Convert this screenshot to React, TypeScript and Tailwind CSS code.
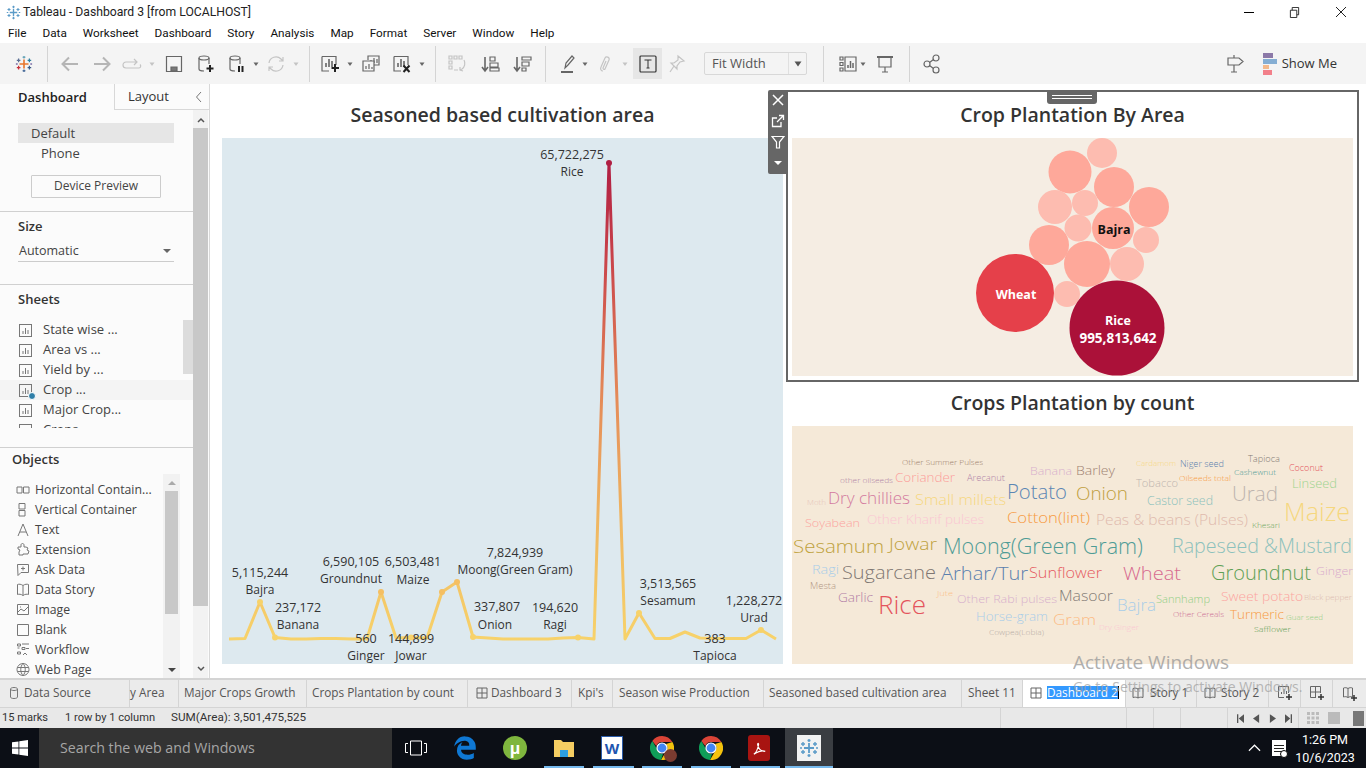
import React from "react";
import { FaEdgeLegacy } from "react-icons/fa6";

const menu = ["File", "Data", "Worksheet", "Dashboard", "Story", "Analysis", "Map", "Format", "Server", "Window", "Help"];

const I = ({ c, children }: { c: string; children: React.ReactNode }) => (
  <svg viewBox="0 0 20 20" fill="none" stroke="#666" strokeWidth="1.2" className={`w-5 h-5 shrink-0 ${c}`}>
    {children}
  </svg>
);
const Caret = ({ c, light }: { c: string; light?: boolean }) => (
  <svg viewBox="0 0 8 8" className={`w-2 h-2 shrink-0 ${c}`}>
    <path d="M1.5 2.5h5L4 6z" fill={light ? "#c4c4c4" : "#666"} />
  </svg>
);
const Sep = ({ c }: { c: string }) => <div className={`w-px h-[36px] bg-[#d4d4d4] shrink-0 ${c}`} />;

const TableauLogo = ({ size, mono }: { size: number; mono?: boolean }) => {
  const col = (x: string) => (mono ? "#5b9bc8" : x);
  return (
    <svg viewBox="0 0 20 20" width={size} height={size} fill="none" strokeWidth="1.4">
      <path d="M10 5v10M5 10h10" stroke={col("#e8762b")} strokeWidth="1.8" />
      <path d="M4 4v4M2 6h4" stroke={col("#5b6f94")} />
      <path d="M16 4v4M14 6h4" stroke={col("#2f7f9e")} />
      <path d="M4 12v4M2 14h4" stroke={col("#c8303a")} />
      <path d="M16 12v4M14 14h4" stroke={col("#3b5a85")} />
      <path d="M10 1v3M8.5 2.5h3" stroke={col("#6aa5b8")} />
      <path d="M10 16v3M8.5 17.5h3" stroke={col("#4d6f9c")} />
      <path d="M1 10h2M17 10h2" stroke={col("#7b6ea8")} />
    </svg>
  );
};

const Toolbar = () => (
  <div className="h-[41px] bg-[#f4f4f4] flex items-center shrink-0">
    <span className="ml-[14px] w-5 flex justify-center shrink-0"><TableauLogo size={18} /></span>
    <Sep c="ml-[13px]" />
    <I c="ml-[12px]"><path d="M18 10H2.5M9 3.5 2.5 10 9 16.5" stroke="#b5b5b5" strokeWidth="2" /></I>
    <I c="ml-[12px]"><path d="M2 10h15.5M11 3.5l6.5 6.5-6.5 6.5" stroke="#b5b5b5" strokeWidth="2" /></I>
    <I c="ml-[10px]"><path d="M15 8H4a3 3 0 0 0 0 6h13a2 2 0 0 0 1-3.500M12 5l3 3-3 3" stroke="#c4c4c4" /></I>
    <Caret c="ml-[6px]" light />
    <I c="ml-[8px]"><path d="M2.500 2.500h15v15h-15z" /><path d="M7 17v-4h6v4z" fill="#777" /></I>
    <I c="ml-[12px]"><ellipse cx="8" cy="4" rx="5" ry="2" /><path d="M3 4v11c0 1 2 2 5 2M13 4v6" /><path d="M14 11v7M10.500 14.500h7" stroke="#222" strokeWidth="2" /></I>
    <I c="ml-[11px]"><ellipse cx="8" cy="4" rx="5" ry="2" /><path d="M3 4v11c0 1 2 2 5 2M13 4v6" /><path d="M12 12v6M15.500 12v6" stroke="#222" strokeWidth="2" /></I>
    <Caret c="ml-[5px]" />
    <I c="ml-[6px]"><path d="M3 9a7 7 0 0 1 12-4l2 2M17 11a7 7 0 0 1-12 4l-2-2M17 3v4h-4M3 17v-4h4" stroke="#c4c4c4" /></I>
    <Caret c="ml-[6px]" light />
    <Sep c="ml-[9px]" />
    <I c="ml-[10px]"><path d="M2 2.500h14V11M9 17H2V2.500" /><path d="M6 13V9M9 13V5M12 13V7" strokeWidth="1.600" /><path d="M15 10v8M11.500 14h7.500" stroke="#222" strokeWidth="2" /></I>
    <Caret c="ml-[6px]" />
    <I c="ml-[7px]"><path d="M7 6V2h11v9h-5" /><path d="M10 9V6M13 9V4M16 9V5" /><path d="M2 7h11v10H2z" fill="#f4f4f4" /><path d="M5 15v-3M8 15v-5M11 15v-2" /></I>
    <I c="ml-[11px]"><path d="M2 2.500h14V11M9 17H2V2.500" /><path d="M6 13V9M9 13V5M12 13V7" strokeWidth="1.600" /><path d="m11.500 11.500 6 6.500M17.500 11.500l-6 6.500" stroke="#222" strokeWidth="2" /></I>
    <Caret c="ml-[6px]" />
    <Sep c="ml-[9px]" />
    <I c="ml-[11px]"><path d="M2 2h3v3H2zM7 2h3v3H7zM12 2h3v3h-3zM2 7h3v3H2zM2 12h3v3H2zM7 16h4M17 6a7 7 0 0 1-2 9l-2 1M13 13l0 3 3 1" stroke="#c4c4c4" /></I>
    <I c="ml-[13px]"><path d="M5 3v13M2 13l3 4 3-4" strokeWidth="1.600" /><path d="M10 3h5v4h-5zM10 9h8v4h-8zM10 14h9v3h-9z" /></I>
    <I c="ml-[12px]"><path d="M5 3v13M2 13l3 4 3-4" strokeWidth="1.600" /><path d="M10 3h9v3h-9zM10 8h7v4h-7zM10 14h4v3h-4z" /></I>
    <Sep c="ml-[13px]" />
    <I c="ml-[12px]"><path d="m7 14 1-5 6-7 2 2-6 7z" /><path d="M3 18h12" strokeWidth="2" /></I>
    <Caret c="ml-[3px]" />
    <I c="ml-[6px]"><path d="M8 17c-2 0-3-2-2-4l4-9c1-2 5-1 4 2l-4 9c-1 1-2 0-2-1l3-7" stroke="#c4c4c4" /></I>
    <Caret c="ml-[6px]" light />
    <div className="ml-[4px] w-[29px] h-[31px] bg-[#e6e6e6] flex items-center justify-center shrink-0">
      <svg viewBox="0 0 18 18" className="w-[18px] h-[18px]" fill="none" stroke="#333">
        <rect x="1" y="1" width="16" height="16" rx="1" strokeWidth="1.200" />
        <path d="M5.500 5h7M9 5v8M7.500 13h3" />
      </svg>
    </div>
    <I c="ml-[5px]"><path d="m11 2 6 5-4 1-3 4 0 3-6-6 3 0 4-3zM7 12l-4 6" stroke="#c4c4c4" /></I>
    <div className="ml-[17px] w-[103px] h-[23px] border border-[#d8d8d8] rounded-[2px] flex items-center shrink-0 text-[13px] text-[#555]">
      <span className="pl-[7px] flex-1">Fit Width</span>
      <span className="w-[18px] h-full border-l border-[#e0e0e0] flex items-center justify-center">
        <svg viewBox="0 0 8 8" className="w-2 h-2"><path d="M0.500 1.500h7L4 6.500z" fill="#555" /></svg>
      </span>
    </div>
    <Sep c="ml-[16px]" />
    <I c="ml-[14px]"><path d="M2 3h3v3H2zM2 8.500h3v3H2zM2 14h3v3H2zM7 3h11v14H7z" /><path d="M10 14v-3M12.500 14V7M15 14v-5" strokeWidth="1.500" /></I>
    <Caret c="ml-px" />
    <I c="ml-[8px]"><path d="M2 3h16" strokeWidth="2" /><path d="M4 3v10h12V3M10 13v5M7 18h6" /></I>
    <Sep c="ml-[14px]" />
    <I c="ml-[12px]"><circle cx="5" cy="10" r="3" /><circle cx="14" cy="4" r="3" /><circle cx="14" cy="16" r="3" /><path d="m7.500 8.500 4-3M7.500 11.500l4 3" /></I>
    <I c="ml-auto"><path d="M3 4h11l4 3.500-4 3.500H3zM9 1v3M9 11v7M6 18h6" /></I>
    <div className="ml-[18px] mr-[29px] flex items-center gap-[5px] text-[13px] text-[#333]">
      <div className="w-[14px] flex flex-col">
        <span className="h-[5px] w-[10px] bg-[#8c79a8]" />
        <span className="h-[5px] w-[14px] bg-[#85aed3] mt-px" />
        <span className="h-[4px] w-[6px] bg-[#f5b98a] mt-px" />
        <span className="h-[5px] w-[9px] bg-[#f2808a] mt-px" />
      </div>
      Show Me
    </div>
  </div>
);

const SheetIcon = ({ check }: { check?: boolean }) => (
  <span className="relative w-[13px] h-[13px] shrink-0">
    <svg viewBox="0 0 13 13" className="w-[13px] h-[13px]" fill="none" stroke="#777">
      <rect x="0.500" y="0.500" width="12" height="12" />
      <path d="M4 10V7M6.500 10V4M9 10V6" />
    </svg>
    {check && <span className="absolute left-[9px] top-[8px] w-[8px] h-[8px] rounded-full bg-[#2f7fa8] border border-white" />}
  </span>
);

const sheets = ["State wise ...", "Area vs ...", "Yield by ...", "Crop ...", "Major Crop...", "Crops"];

const objectIcons: Record<string, React.ReactNode> = {
  "Horizontal Contain...": <path d="M1 5h5v6H1zM7.500 5h5.500v6H7.500z" />,
  "Vertical Container": <path d="M3 1.500h6v5.500H3zM3 8.500h6V14H3z" />,
  Text: <path d="M2 14 7 2l5 12M4 10h6" />,
  Extension: <path d="M2 5h3V3c0-2 3-2 3 0v2h2l2 1-1 2 2 1-1 3H7v1H3v-3l1-2-2-1z" />,
  "Ask Data": <path d="M1.500 2.500h11v8H5l-3 3zM5 6.500h4M7 4.500v4" />,
  "Data Story": <path d="M7 3.500C5 2 3 2 1.500 2.500v10C3 12 5 12 7 13.500c2-1.500 4-1.500 5.500-1v-10C11 2 9 2 7 3.500zM7 3.500v10" />,
  Image: <path d="M1.500 2.500h11v10h-11zM2 10l3-3 3 2 4-4M4 5h1" />,
  Blank: <path d="M1.500 2.500h11v11h-11z" />,
  Workflow: <path d="M1.500 2h3v2h-3zM6 2h7M1.500 6h2M6 5.500h3v2H6zM10 6.500h3M1.500 10h3v2h-3zM7 13l2-2 2 2" />,
  "Web Page": <path d="M7 1.500a6 6 0 1 0 .01 0zM1.500 5.500h11M1.500 9.500h11M7 1.500c-3 3-3 9 0 12M7 1.500c3 3 3 9 0 12" />,
};

const Sidebar = () => (
  <aside className="w-[210px] shrink-0 bg-[#fbfbfb] border-r border-[#d8d8d8] flex flex-col">
    <div className="h-[26px] flex shrink-0 text-[13px]">
      <div className="w-[114px] pl-[18px] font-semibold text-[#222] leading-[27px]">Dashboard</div>
      <div className="w-[95px] pt-px border-l border-b border-[#d8d8d8] flex items-center justify-between pl-[13px] pr-[6px] text-[#333]">
        Layout
        <svg viewBox="0 0 8 12" className="w-2 h-3" fill="none" stroke="#777"><path d="M6 1 1.500 6 6 11" /></svg>
      </div>
    </div>
    <div className="flex flex-1 min-h-0">
      <div className="w-[193px] shrink-0 flex flex-col text-[13px] text-[#444]">
        <div className="h-[102px] border-b border-[#d0d0d0] shrink-0">
          <div className="ml-[18px] mt-[13px] w-[156px] h-[20px] bg-[#e6e6e6] pl-[13px] leading-[20px]">Default</div>
          <div className="ml-[41px] leading-[20px]">Phone</div>
          <div className="ml-[31px] mt-[12px] w-[130px] h-[23px] border border-[#ccc] text-[12px] text-center leading-[20px] rounded-[1px]">Device Preview</div>
        </div>
        <div className="h-[73px] border-b border-[#d0d0d0] shrink-0 pl-[18px]">
          <div className="mt-[4px] font-semibold text-[13px] text-[#333] leading-[20px]">Size</div>
          <div className="mt-[5px] w-[156px] h-[21px] border-b border-[#ccc] flex items-center justify-between pl-px pr-[3px] text-[12.500px]">
            Automatic
            <svg viewBox="0 0 8 6" className="w-2 h-[6px]"><path d="M0 1h8L4 5z" fill="#666" /></svg>
          </div>
        </div>
        <div className="h-[163px] border-b border-[#d0d0d0] shrink-0 flex flex-col overflow-hidden">
          <div className="pl-[18px] mt-[4px] font-semibold text-[#333] leading-[20px]">Sheets</div>
          <div className="relative mt-[11px] h-[108px] overflow-hidden">
            <div className="absolute right-0 top-0 w-[10px] h-[54px] bg-[#dcdcdc]" />
            {sheets.map((s, i) => (
              <div key={s} className={`h-[20px] flex items-center pl-[19px] gap-[11px] ${i === 3 ? "bg-[#f4f4f4]" : ""}`}>
                <SheetIcon check={i === 3} />
                {s}
              </div>
            ))}
          </div>
        </div>
        <div className="flex-1 min-h-0 flex flex-col">
          <div className="pl-[12px] mt-px font-semibold text-[#333] leading-[20px]">Objects</div>
          <div className="mt-[5px] flex flex-1 min-h-0">
            <div className="w-[163px] pt-[6px] text-[12.250px]">
              {Object.keys(objectIcons).map((k) => (
                <div key={k} className="h-[20px] flex items-center pl-[16px] gap-[5px] whitespace-nowrap">
                  <svg viewBox="0 0 14 16" className="w-[14px] h-[16px] shrink-0" fill="none" stroke="#777">{objectIcons[k]}</svg>
                  {k}
                </div>
              ))}
            </div>
            <div className="w-[17px] bg-[#f2f2f2] flex flex-col items-center">
              <svg viewBox="0 0 8 6" className="w-2 h-[6px] mt-[6px]"><path d="M0 5h8L4 1z" fill="#aaa" /></svg>
              <div className="mt-[5px] w-[13px] h-[123px] bg-[#c8c8c8]" />
              <svg viewBox="0 0 8 6" className="w-2 h-[6px] mt-auto mb-[5px]"><path d="M0 1h8L4 5z" fill="#444" /></svg>
            </div>
          </div>
        </div>
      </div>
      <div className="w-[15px] shrink-0 bg-[#f2f2f2] flex flex-col items-center">
        <svg viewBox="0 0 8 6" className="w-2 h-[6px] mt-[7px]" fill="none" stroke="#555" strokeWidth="1.500"><path d="m1 5 3-3 3 3" /></svg>
        <div className="mt-[5px] w-[15px] h-[478px] bg-[#c8c8c8]" />
        <svg viewBox="0 0 8 6" className="w-2 h-[6px] mt-auto mb-[6px]" fill="none" stroke="#555" strokeWidth="1.500"><path d="m1 1 3 3 3-3" /></svg>
      </div>
    </div>
  </aside>
);

const linePts: [number, number][] = [
  [229, 639], [245, 638.5], [260, 602], [275, 637.5], [291, 639], [306, 639], [321, 638.5], [336, 638.5], [352, 639], [367, 639],
  [381, 592], [396, 638], [411, 637.5], [427, 638], [442, 592], [457, 582], [473, 637], [488, 638], [503, 639], [518, 639],
  [533, 639], [548, 639], [563, 638], [578, 637.5], [594, 639], [609, 163], [625, 639], [639, 613], [655, 638.5], [670, 638.5],
  [685, 632], [700, 638], [715, 638.5], [730, 638.5], [746, 638.5], [761, 630], [776, 639],
];
const lineDots = [[260, 602], [275, 637.5], [381, 592], [411, 637.5], [442, 592], [457, 582], [473, 637], [578, 637.5], [609, 163], [639, 613], [761, 630]];
const lineLabels: [string, number, number][] = [
  ["65,722,275", 572, 159], ["Rice", 572, 176],
  ["5,115,244", 260, 577], ["Bajra", 260, 594],
  ["237,172", 298, 612], ["Banana", 298, 629],
  ["6,590,105", 351, 566], ["Groundnut", 351, 583],
  ["6,503,481", 413, 566], ["Maize", 413, 584],
  ["7,824,939", 515, 557], ["Moong(Green Gram)", 515, 574],
  ["337,807", 497, 611], ["Onion", 495, 629],
  ["194,620", 555, 612], ["Ragi", 555, 629],
  ["3,513,565", 668, 588], ["Sesamum", 668, 605],
  ["1,228,272", 754, 605], ["Urad", 754, 622],
  ["560", 366, 643], ["Ginger", 366, 660],
  ["144,899", 411, 643], ["Jowar", 411, 660],
  ["383", 715, 643], ["Tapioca", 715, 660],
];

const LineChart = () => (
  <svg viewBox="222 138 561 526" className="w-[561px] h-[526px] bg-[#dde9ef] block">
    <defs>
      <linearGradient id="peak" gradientUnits="userSpaceOnUse" x1="0" y1="639" x2="0" y2="163">
        <stop offset="0" stopColor="#f7d26a" />
        <stop offset="0.25" stopColor="#efb662" />
        <stop offset="0.5" stopColor="#e58c58" />
        <stop offset="0.8" stopColor="#c9434a" />
        <stop offset="1" stopColor="#b01e42" />
      </linearGradient>
    </defs>
    <polyline points={linePts.map((p) => p.join(",")).join(" ")} fill="none" stroke="url(#peak)" strokeWidth="3" strokeLinejoin="round" />
    {lineDots.map(([x, y]) => (
      <circle key={x} cx={x} cy={y} r="3" fill={y < 200 ? "#b01e42" : y < 600 ? "#f5bf62" : "#f7d26a"} />
    ))}
    {lineLabels.map(([t, x, y]) => (
      <text key={t} x={x} y={y} textAnchor="middle" fontSize={/\d/.test(t) ? 12.5 : 12} fill="#333">{t}</text>
    ))}
  </svg>
);

const bubbles: [number, number, number, string][] = [
  [1102, 153, 15, "#fdbcb0"], [1070, 172, 21.5, "#fea89a"], [1114, 187, 20, "#fea89a"], [1149, 207, 20, "#fea89a"],
  [1055, 207, 17, "#fdbcb0"], [1085, 203, 13, "#fdbcb0"], [1113, 228, 21, "#fea89a"], [1146, 240, 13, "#fdbcb0"],
  [1078, 228, 13.5, "#fdbcb0"], [1049, 245, 20, "#fea89a"], [1087, 264, 23, "#fea89a"], [1127, 264, 17, "#fdbcb0"],
  [1067, 294, 13, "#fdbcb0"], [1015, 293, 39, "#e5404a"], [1117, 328, 47.500, "#ab1139"],
];

const BubbleChart = () => (
  <svg viewBox="792 138 561 238" className="w-[561px] h-[238px] bg-[#f5ede3] block">
    {bubbles.map(([x, y, r, f]) => <circle key={`${x}-${y}`} cx={x} cy={y} r={r} fill={f} />)}
    <g fontWeight="700" fontSize="12.500" textAnchor="middle">
      <text x="1114" y="234" fill="#111">Bajra</text>
      <text x="1016" y="299" fill="#fff">Wheat</text>
      <text x="1118" y="325" fill="#fff">Rice</text>
      <text x="1118" y="343" fill="#fff" fontSize="13.500">995,813,642</text>
    </g>
  </svg>
);

const words: [string, number, number, number, number, string][] = [
  ["Other Summer Pulses", 902, 465, 8, 81, "#9c7f6b"], ["other oilseeds", 840, 483, 7.500, 53, "#b083a6"], ["Coriander", 895, 482, 13, 60, "#fc9d9a"],
  ["Arecanut", 967, 481, 9, 38, "#b286a8"], ["Banana", 1030, 475, 11.500, 42, "#d7b0cd"], ["Barley", 1076, 475, 13, 39, "#a08272"],
  ["Moth", 807, 505, 8, 19, "#e6c4b8"], ["Dry chillies", 828, 504, 16, 82, "#d37a9f"], ["Small millets", 915, 505, 15, 91, "#f5d77e"],
  ["Potato", 1007, 499, 20, 60, "#5b86b4"], ["Onion", 1076, 500, 18, 52, "#bf9e3d"], ["Soyabean", 805, 527, 11.500, 55, "#fca4a0"],
  ["Other Kharif pulses", 867, 524, 12.500, 117, "#fbc6d3"], ["Cotton(lint)", 1007, 523, 14.500, 83, "#f79a42"], ["Peas & beans (Pulses)", 1096, 525, 14.500, 152, "#e0b9ad"],
  ["Khesari", 1252, 528, 8, 28, "#6ba85c"], ["Maize", 1284, 521, 25, 66, "#f5d77e"], ["Sesamum", 793, 553, 19, 91, "#bfa23d"],
  ["Jowar", 889, 550, 17, 48, "#bfa23d"], ["Moong(Green Gram)", 943, 554, 22, 200, "#4f9c96"], ["Rapeseed &Mustard", 1172, 553, 20, 180, "#8cc1bc"],
  ["Ragi", 812, 574, 12, 27, "#a9cde8"], ["Sugarcane", 842, 579, 18, 94, "#7f7772"], ["Arhar/Tur", 941, 580, 19, 87, "#5b7fae"],
  ["Sunflower", 1029, 578, 15, 73, "#e55a5f"], ["Wheat", 1123, 580, 19, 58, "#d7698f"], ["Groundnut", 1211, 580, 20, 100, "#5fa055"],
  ["Ginger", 1316, 575, 11.500, 37, "#d8a9cc"], ["Mesta", 810, 589, 9, 26, "#b39785"], ["Garlic", 838, 602, 12.500, 35, "#b27fa6"],
  ["Rice", 878, 614, 25, 48, "#e4545c"], ["Jute", 937, 596, 8, 16, "#fbbf88"], ["Other Rabi pulses", 957, 603, 11.500, 100, "#d7b0cd"],
  ["Masoor", 1059, 601, 14, 54, "#837b76"], ["Bajra", 1117, 611, 15.500, 39, "#a9cde8"], ["Sannhamp", 1156, 603, 10, 54, "#93cf85"],
  ["Sweet potato", 1221, 601, 13, 82, "#fca4a0"], ["Black pepper", 1304, 600, 8, 48, "#dcbcb0"], ["Horse-gram", 976, 621, 12, 72, "#a9cde8"],
  ["Gram", 1053, 625, 15, 43, "#fcbb84"], ["Other Cereals", 1173, 617, 8, 51, "#cc6d94"], ["Turmeric", 1230, 619, 12.500, 54, "#f79a42"],
  ["Guar seed", 1286, 620, 8, 37, "#93cf85"], ["Dry Ginger", 1099, 630, 8, 40, "#fbc6d3"], ["Cowpea(Lobia)", 989, 635, 8, 55, "#b5aca6"],
  ["Safflower", 1254, 632, 8, 37, "#5fa055"], ["Cardamom", 1136, 466, 8, 40, "#f5d77e"], ["Niger seed", 1180, 467, 9.500, 44, "#5b7fae"],
  ["Tapioca", 1248, 462, 9, 32, "#837b76"], ["Cashewnut", 1234, 475, 8, 42, "#4f9c96"], ["Coconut", 1289, 471, 9, 34, "#e4545c"],
  ["Oilseeds total", 1179, 481, 8, 52, "#f79a42"], ["Tobacco", 1136, 487, 11, 42, "#bdb4ae"], ["Linseed", 1292, 488, 12.500, 45, "#9dd48f"],
  ["Urad", 1232, 501, 20, 46, "#bdb4ae"], ["Castor seed", 1147, 505, 12, 66, "#8cc1bc"],
];

const WordCloud = () => (
  <svg viewBox="792 426 561 238" className="w-[561px] h-[238px] bg-[#f5e9d8] block font-light">
    {words.map(([t, x, y, s, w, c]) => (
      <text key={t} x={x} y={y} fontSize={s} fill={c} textLength={w} lengthAdjust="spacingAndGlyphs">{t}</text>
    ))}
  </svg>
);

const Dashboard = () => (
  <div className="relative flex flex-1 bg-white">
    <div className="ml-[12px] w-[561px] shrink-0">
      <h2 className="h-[54px] pt-[8px] flex items-center justify-center text-[19.500px] font-semibold text-[#333]">Seasoned based cultivation area</h2>
      <LineChart />
    </div>
    <div className="ml-[3px] w-[573px] shrink-0">
      <div className="relative mt-[6px] h-[292px] border-2 border-[#666] px-[4px]">
        <h2 className="h-[46px] flex items-center justify-center text-[19.500px] font-semibold text-[#333]">Crop Plantation By Area</h2>
        <BubbleChart />
        <div className="absolute left-[-20px] top-[-2px] w-[20px] h-[84px] bg-[#666] rounded-l-[2px] flex flex-col items-center text-white">
          <svg viewBox="0 0 14 14" className="w-[14px] h-[14px] mt-[3px]" fill="none" stroke="#fff" strokeWidth="1.500"><path d="m2 2 10 10M12 2 2 12" /></svg>
          <svg viewBox="0 0 14 14" className="w-[14px] h-[14px] mt-[7px]" fill="none" stroke="#fff" strokeWidth="1.300"><path d="M10 8v4.500H1.500V4H6M6 8l6-6M8 1.500h4.500V6" /></svg>
          <svg viewBox="0 0 14 14" className="w-[14px] h-[14px] mt-[7px]" fill="none" stroke="#fff" strokeWidth="1.200"><path d="M1 1.500h12L8.500 7v6h-3V7z" /></svg>
          <svg viewBox="0 0 8 6" className="w-2 h-[6px] mt-[11px]"><path d="M0 1h8L4 5z" fill="#fff" /></svg>
        </div>
        <div className="absolute left-[259px] top-[-2px] w-[50px] h-[14px] bg-[#666] rounded-b-[3px] flex flex-col items-center justify-center gap-[2px]">
          <span className="w-[40px] h-px bg-white" />
          <span className="w-[40px] h-px bg-white" />
        </div>
      </div>
      <h2 className="h-[44px] pb-[2px] flex items-center justify-center text-[19.500px] font-semibold text-[#333]">Crops Plantation by count</h2>
      <div className="pl-[6px]"><WordCloud /></div>
    </div>
    <div className="absolute left-[863px] top-[566px] text-[19px] text-[#9d9d9d] leading-[24px] whitespace-nowrap opacity-80">Activate Windows</div>
    <div className="absolute left-[863px] top-[593px] text-[14px] text-[#9d9d9d] leading-[20px] whitespace-nowrap z-10 opacity-70">Go to Settings to activate Windows.</div>
  </div>
);

const tabBase = "h-full pb-[2px] flex items-center border-r border-[#d4d4d4] shrink-0";
const TabGrid = () => (
  <svg viewBox="0 0 12 12" className="w-3 h-3 shrink-0" fill="none" stroke="#666"><path d="M1 1h10v10H1zM6 1v10M1 6h10" /></svg>
);
const TabBook = () => (
  <svg viewBox="0 0 12 12" className="w-3 h-3 shrink-0" fill="none" stroke="#666"><path d="M6 2C4.500 1 2.500 1 1 1.500v9c1.500-.5 3.500-.5 5 .5 1.500-1 3.500-1 5-.5v-9C9.500 1 7.500 1 6 2zM6 2v9" /></svg>
);

const Tabs = () => (
  <div className="h-[29px] shrink-0 flex bg-[#ebebeb] border-t-2 border-[#d4d4d4] text-[11.800px] text-[#555] whitespace-nowrap">
    <div className={`${tabBase} w-[130px] pl-[9px] gap-[5px]`}>
      <svg viewBox="0 0 10 14" className="w-[10px] h-[14px]" fill="none" stroke="#777"><path d="M1.500 3c0-2 7-2 7 0v8c0 2-7 2-7 0zM1.500 3c0 2 7 2 7 0" /></svg>
      Data Source
    </div>
    <div className={`${tabBase} w-[49px]`}>y Area</div>
    <div className={`${tabBase} w-[128px] pl-[5px]`}>Major Crops Growth</div>
    <div className={`${tabBase} w-[161px] pl-[5px]`}>Crops Plantation by count</div>
    <div className={`${tabBase} w-[104px] pl-[8px] gap-[3px]`}><TabGrid />Dashboard 3</div>
    <div className={`${tabBase} w-[41px] pl-[6px]`}>Kpi's</div>
    <div className={`${tabBase} w-[151px] pl-[6px]`}>Season wise Production</div>
    <div className={`${tabBase} w-[198px] pl-[5px]`}>Seasoned based cultivation area</div>
    <div className={`${tabBase} w-[61px] pl-[6px]`}>Sheet 11</div>
    <div className={`${tabBase} w-[103px] bg-white pl-[7px] gap-[5px]`}>
      <TabGrid />
      <span className="bg-[#3399ff] text-white h-[13px] leading-[13px] border-r border-black">Dashboard 2</span>
    </div>
    <div className={`${tabBase} w-[71px] pl-[6px] gap-[6px]`}><TabBook />Story 1</div>
    <div className={`${tabBase} w-[72px] pl-[7px] gap-[5px]`}><TabBook />Story 2</div>
    <div className={`${tabBase} w-[32px] justify-center`}>
      <svg viewBox="0 0 16 16" className="w-4 h-4" fill="none" stroke="#666"><path d="M1.500 1.500h10V8M7 12.500H1.500v-11M4.500 9V7M7 9V4M9.500 9V6" /><path d="M12 9v6M9 12h6" stroke="#333" strokeWidth="1.500" /></svg>
    </div>
    <div className={`${tabBase} w-[32px] justify-center`}>
      <svg viewBox="0 0 16 16" className="w-4 h-4" fill="none" stroke="#666"><path d="M1.500 1.500h10V8M7 12.500H1.500v-11M6.500 1.500v11M1.500 7h10" /><path d="M12 9v6M9 12h6" stroke="#333" strokeWidth="1.500" /></svg>
    </div>
    <div className="w-[33px] h-full flex items-center justify-center shrink-0">
      <svg viewBox="0 0 16 16" className="w-4 h-4" fill="none" stroke="#666"><path d="M6 2.500C4.500 1.500 3 1.500 1.500 2v9c1.500-.5 3-.5 4.500.5 1.500-1 3-1 4.500-.5V2C9 1.500 7.500 1.500 6 2.500zM6 2.500v9" /><path d="M12 9v6M9 12h6" stroke="#333" strokeWidth="1.500" /></svg>
    </div>
  </div>
);

const StatusBar = () => (
  <div className="h-[21px] shrink-0 flex items-center bg-[#e8e8e8] border-t border-[#d4d4d4] text-[11.100px] text-[#333] whitespace-nowrap font-['Roboto',sans-serif]">
    <span className="ml-[2px] w-[63px]">15 marks</span>
    <span className="w-[106px]">1 row by 1 column</span>
    <span className="w-[829px] text-[11.700px]">SUM(Area): 3,501,475,525</span>
    <span className="w-[126px] h-full border-l border-[#d4d4d4]" />
    <span className="w-[27px] h-full border-l border-[#d4d4d4]" />
    <span className="w-[27px] h-full border-l border-[#d4d4d4]" />
    <span className="w-[47px] h-full border-l border-[#d4d4d4]" />
    <span className="w-[71px] h-full border-l border-[#d4d4d4] flex items-center pl-[9px] gap-[9px]">
      <svg viewBox="0 0 8 10" className="w-[7px] h-[9px]"><path d="M0 0h1.500v10H0zM8 0v10L2 5z" fill="#555" /></svg>
      <svg viewBox="0 0 8 10" className="w-[7px] h-[9px]"><path d="M7 0v10L0 5z" fill="#555" /></svg>
      <svg viewBox="0 0 8 10" className="w-[7px] h-[9px]"><path d="M1 0v10l7-5z" fill="#555" /></svg>
      <svg viewBox="0 0 8 10" className="w-[7px] h-[9px]"><path d="M8 0H6.500v10H8zM0 0v10l6-5z" fill="#555" /></svg>
    </span>
    <span className="flex-1 h-full border-l border-[#d4d4d4] flex items-center pl-[8px] gap-[7px]">
      <svg viewBox="0 0 12 12" className="w-3 h-3"><path d="M0 0h3v3H0zM4.500 0h3v3h-3zM9 0h3v3H9zM0 4.500h3v3H0zM4.500 4.500h3v3h-3zM9 4.500h3v3H9zM0 9h3v3H0zM4.500 9h3v3h-3zM9 9h3v3H9z" fill="#bbb" /></svg>
      <span className="w-[12px] h-[12px] bg-[#bbb] mx-[2px]" />
      <span className="ml-[4px] w-[11px] h-[15px] bg-[#777]" />
    </span>
  </div>
);

const Chrome = ({ badge }: { badge?: boolean }) => (
  <span className="relative w-[24px] h-[24px] shrink-0">
    <svg viewBox="0 0 24 24" className="w-[24px] h-[24px]">
      <path d="M12 0a12 12 0 0 1 10.400 6H12a6 6 0 0 0-5.700 4L2.300 5A12 12 0 0 1 12 0z" fill="#db4437" />
      <path d="M22.400 6A12 12 0 0 1 11 24l5-8.500A6 6 0 0 0 16 8z" fill="#f4c20d" />
      <path d="M11 24A12 12 0 0 1 2.300 5l4.700 8a6 6 0 0 0 6 5z" fill="#0f9d58" />
      <circle cx="12" cy="12" r="5" fill="#4285f4" stroke="#fff" strokeWidth="1.200" />
    </svg>
    {badge && <span className="absolute right-[-3px] bottom-[-2px] w-[13px] h-[13px] rounded-full bg-[#7a3b30]" />}
  </span>
);

const Taskbar = () => (
  <div className="relative h-[40px] shrink-0 flex items-center bg-[#0c0f16] text-white">
    <div className="w-[39px] shrink-0 flex justify-center">
      <svg viewBox="0 0 16 16" className="w-[16px] h-[16px]"><path d="M0 2.300 6.500 1.400v6.200H0zM7.300 1.300 16 0v7.600H7.300zM0 8.400h6.500v6.200L0 13.700zM7.300 8.400H16V16l-8.700-1.300z" fill="#fff" /></svg>
    </div>
    <div className="w-[353px] h-full bg-[#333] pl-[21px] flex items-center text-[14.200px] text-[#a6a6a6] shrink-0">Search the web and Windows</div>
    <svg viewBox="0 0 22 16" className="ml-[13px] w-[22px] h-[16px] shrink-0" fill="none" stroke="#fff"><path d="M5.500 1h11v14h-11zM3 3.500H.5v9H3M19 3.500h2.500v9H19" /></svg>
    <FaEdgeLegacy className="ml-[26px] w-[24px] h-[24px] text-[#0f78d4] shrink-0" />
    <span className="ml-[26px] w-[24px] h-[24px] rounded-full bg-[#7fb63e] flex items-center justify-center font-bold text-[16px] shrink-0">µ</span>
    <svg viewBox="0 0 22 22" className="ml-[26px] w-[22px] h-[22px] shrink-0"><path d="M1 3h7l2 2h11v15H1z" fill="#f5cd62" /><path d="M7 13h8v7H7z" fill="#2d9fe0" /></svg>
    <span className="ml-[26px] w-[22px] h-[24px] bg-white border border-[#2b5ba8] flex items-center justify-center font-bold text-[15px] text-[#1f56b0] shrink-0">W</span>
    <span className="ml-[27px] flex shrink-0"><Chrome badge /></span>
    <span className="ml-[25px] flex shrink-0"><Chrome /></span>
    <span className="ml-[25px] w-[22px] h-[26px] rounded-[3px] bg-[#a81411] flex items-center justify-center shrink-0">
      <svg viewBox="0 0 16 16" className="w-[15px] h-[15px]" fill="none" stroke="#fff" strokeWidth="1.300"><path d="M2 14c2-1 4-5 5-10 0-2-1-2-1 0 1 5 4 7 8 7-2-1-7 0-12 3z" /></svg>
    </span>
    <div className="ml-[15px] w-[48px] h-full bg-[#3a3d42] flex items-center justify-center shrink-0">
      <span className="w-[24px] h-[26px] bg-[#f2f2f2] flex items-center justify-center"><TableauLogo size={20} mono /></span>
    </div>
    <div className="ml-auto flex items-center shrink-0">
      <svg viewBox="0 0 14 8" className="w-[13px] h-[8px]" fill="none" stroke="#fff" strokeWidth="1.300"><path d="m1 7 6-6 6 6" /></svg>
      <span className="relative ml-[11px] w-[14px] h-[16px] bg-white flex flex-col justify-center gap-[2px] px-[2px]">
        <span className="h-px bg-[#222]" />
        <span className="h-px bg-[#222]" />
        <span className="h-px bg-[#222]" />
        <span className="absolute right-[-2px] bottom-[-2px] w-[8px] h-[8px] rounded-full bg-white border border-black" />
      </span>
      <div className="mr-[2px] mt-px w-[78px] text-center text-[12.500px] leading-[18px] font-['Roboto',sans-serif]">
        <div>1:26 PM</div>
        <div>10/6/2023</div>
      </div>
    </div>
    <div className="absolute left-[544px] bottom-0 w-[40px] h-[2px] bg-[#76b9ed]" />
    <div className="absolute left-[593px] bottom-0 w-[41px] h-[2px] bg-[#76b9ed]" />
    <div className="absolute left-[642px] bottom-0 w-[40px] h-[2px] bg-[#76b9ed]" />
    <div className="absolute left-[691px] bottom-0 w-[40px] h-[2px] bg-[#76b9ed]" />
    <div className="absolute left-[740px] bottom-0 w-[40px] h-[2px] bg-[#76b9ed]" />
    <div className="absolute left-[785px] bottom-0 w-[48px] h-[2px] bg-[#76b9ed]" />
  </div>
);

export default function App() {
  return (
    <div className="w-[1366px] h-[768px] overflow-hidden flex flex-col bg-white font-['Open_Sans',sans-serif]">
      <div className="h-[24px] shrink-0 flex items-center pl-[6px] text-[12.200px] text-[#222] font-['Roboto',sans-serif]">
        <TableauLogo size={15} mono />
        <span className="ml-[2px]">Tableau - Dashboard 3 [from LOCALHOST]</span>
        <div className="ml-auto flex items-center">
          <span className="w-[10px] h-px bg-black" />
          <svg viewBox="0 0 12 12" className="ml-[35px] w-[11px] h-[11px]" fill="none" stroke="#222"><path d="M1.500 3.500h7v8h-7zM3.500 3.500v-3h7v8h-2" /></svg>
          <svg viewBox="0 0 12 12" className="ml-[35px] mr-[19px] w-[12px] h-[12px]" fill="none" stroke="#222"><path d="m1 1 10 10M11 1 1 11" /></svg>
        </div>
      </div>
      <nav className="h-[19px] shrink-0 flex items-center gap-[16px] px-[8px] text-[11.750px] text-[#111] font-['Roboto',sans-serif]">
        {menu.map((m) => <span key={m}>{m}</span>)}
      </nav>
      <Toolbar />
      <main className="h-[594px] shrink-0 flex">
        <Sidebar />
        <Dashboard />
      </main>
      <Tabs />
      <StatusBar />
      <Taskbar />
    </div>
  );
}
